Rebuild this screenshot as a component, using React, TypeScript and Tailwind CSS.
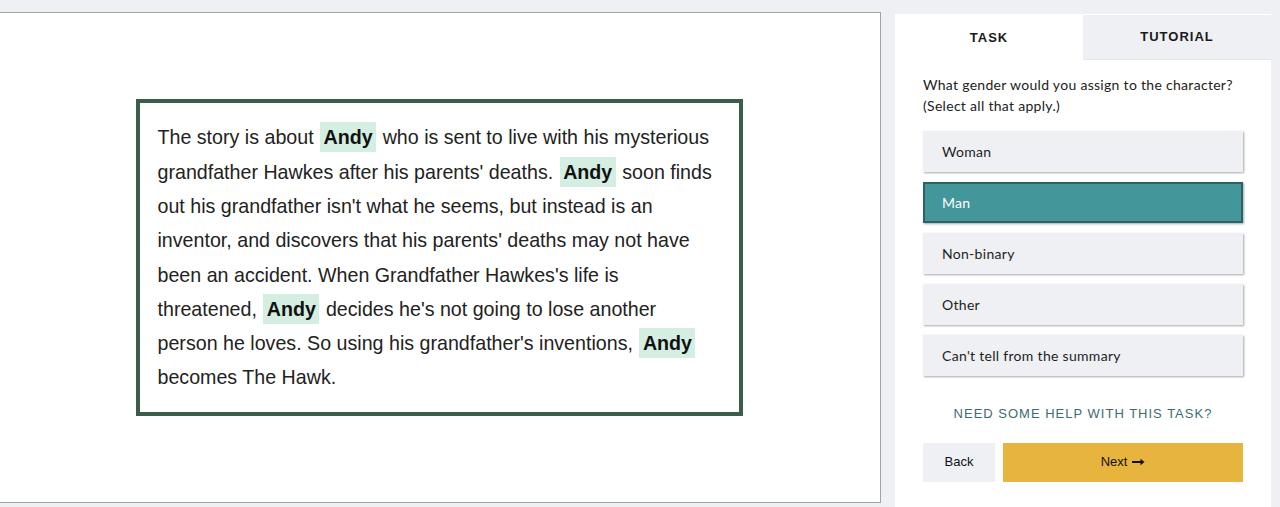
import React from 'react';

const OPTIONS = ['Woman', 'Man', 'Non-binary', 'Other', "Can't tell from the summary"];

function Name() {
  return (
    <span className="mx-[1px] bg-[#d4eee1] px-[3.5px] py-[4px] font-bold text-[#111]">Andy</span>
  );
}

export default function App() {
  const selected = 'Man';
  return (
    <div className="flex h-[507px] w-[1280px] overflow-hidden bg-[#eef0f3]">
      {/* story panel */}
      <div className="mt-[12px] flex h-[491px] w-[881px] shrink-0 items-center justify-center border border-l-0 border-[#a3a3a3] bg-white">
        <div className="mr-[2px] w-[607px] border-[4px] border-[#3b5e4b] px-[18px] py-[17px]">
          <p className="text-[19.65px] leading-[34.3px] text-[#222] [font-family:'Liberation_Sans',Arial,sans-serif]">
            The story is about <Name /> who is sent to live with his mysterious grandfather Hawkes after
            his parents' deaths. <Name /> soon finds out his grandfather isn't what he seems, but instead
            is an inventor, and discovers that his parents' deaths may not have been an accident. When
            Grandfather Hawkes's life is threatened, <Name /> decides he's not going to lose another
            person he loves. So using his grandfather's inventions, <Name /> becomes The Hawk.
          </p>
        </div>
      </div>

      {/* task panel */}
      <div className="ml-[14px] mt-[14px] flex w-[376px] shrink-0 flex-col bg-white">
        <div className="flex h-[46px] pt-[1px] text-[13px] font-bold tracking-[1px] text-[#1a1a1a] [font-family:'Liberation_Sans',Arial,sans-serif]">
          <div className="flex w-[188px] items-center justify-center bg-white">TASK</div>
          <div className="flex flex-1 items-center justify-center border-b border-[#e2e5ea] bg-[#eef0f3]">
            TUTORIAL
          </div>
        </div>

        <div className="flex flex-col px-[28px] pt-[14px] [font-family:Lato,'Noto_Sans',sans-serif]">
          <p className="text-[14px] leading-[21px] tracking-[0.3px] text-[#222]">
            What gender would you assign to the character?
            <br />
            (Select all that apply.)
          </p>

          <div className="mt-[15px] flex w-[320px] flex-col gap-[10px]">
            {OPTIONS.map((o) => {
              const on = o === selected;
              return (
                <div
                  key={o}
                  className={
                    on
                      ? 'flex h-[41px] items-center border-2 border-[#2c6166] bg-[#43969a] pl-[17px] text-[14px] tracking-[0.3px] text-white shadow-[1px_1px_2px_rgba(0,0,0,0.35)]'
                      : 'flex h-[41px] items-center bg-[#eef0f3] pl-[19px] text-[14px] tracking-[0.3px] text-[#1e1e1e] shadow-[1px_1px_2px_rgba(0,0,0,0.35)]'
                  }
                >
                  {o}
                </div>
              );
            })}
          </div>

          <div className="mt-[28px] text-center text-[13px] tracking-[1px] text-[#3d6c75] [font-family:'Liberation_Sans',Arial,sans-serif]">
            NEED SOME HELP WITH THIS TASK?
          </div>

          <div className="mt-[19px] flex w-[320px] gap-[8px] text-[13px] text-[#111] [font-family:'Liberation_Sans',Arial,sans-serif]">
            <div className="flex h-[39px] w-[72px] items-center justify-center bg-[#eef0f3]">Back</div>
            <div className="flex h-[39px] flex-1 items-center justify-center gap-[5px] bg-[#e7b43e]">
              Next
              <svg width="13" height="8" viewBox="0 0 13 8" fill="none">
                <path d="M0 4H10" stroke="#111" strokeWidth="2" />
                <path d="M8.5 0.8L12.5 4L8.5 7.2Z" fill="#111" />
              </svg>
            </div>
          </div>
        </div>
      </div>
    </div>
  );
}
